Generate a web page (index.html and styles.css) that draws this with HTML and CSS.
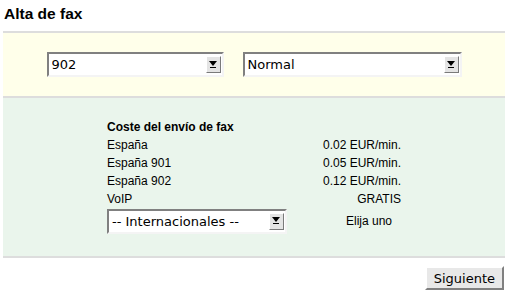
FILE: index.html
```html
<!DOCTYPE html>
<html lang="es">
<head>
    <meta charset="UTF-8">
    <title>Alta de fax</title>
    <link rel="stylesheet" href="styles.css">
</head>
<body>
    <h1 class="title">Alta de fax</h1>

    <div class="panel filters">
        <div class="select w-prefix">
            <select><option>902</option></select>
            <span class="arrow"><svg width="9" height="8" viewBox="0 0 9 8"><polygon points="0,0 8,0 4,5" fill="#000"/><rect x="1" y="6" width="6" height="1" fill="#000"/></svg></span>
        </div>
        <div class="select w-type">
            <select><option>Normal</option></select>
            <span class="arrow"><svg width="9" height="8" viewBox="0 0 9 8"><polygon points="0,0 8,0 4,5" fill="#000"/><rect x="1" y="6" width="6" height="1" fill="#000"/></svg></span>
        </div>
    </div>

    <div class="panel costs">
        <table class="rates">
            <tr><th colspan="2">Coste del envío de fax</th></tr>
            <tr><td>España</td><td class="price">0.02 EUR/min.</td></tr>
            <tr><td>España 901</td><td class="price">0.05 EUR/min.</td></tr>
            <tr><td>España 902</td><td class="price">0.12 EUR/min.</td></tr>
            <tr><td>VoIP</td><td class="price">GRATIS</td></tr>
            <tr class="intl">
                <td>
                    <div class="select w-intl">
                        <select><option>-- Internacionales --</option></select>
                        <span class="arrow"><svg width="9" height="8" viewBox="0 0 9 8"><polygon points="0,0 8,0 4,5" fill="#000"/><rect x="1" y="6" width="6" height="1" fill="#000"/></svg></span>
                    </div>
                </td>
                <td class="price pick">Elija uno</td>
            </tr>
        </table>
    </div>

    <div class="actions">
        <button class="btn">Siguiente</button>
    </div>
</body>
</html>
```

FILE: styles.css
```css
body {
    margin: 0;
    font-family: "Liberation Sans", Arial, sans-serif;
    font-size: 12px;
    color: #000;
    background-color: #fff;
}
.title {
    margin: 0;
    padding: 5px 4px 0;
    height: 26px;
    font-size: 15.5px;
    font-weight: bold;
}
.panel {
    margin: 0 4px 0 3px;
    border-top: 2px solid #dddddd;
}
.filters {
    background-color: #ffffea;
    padding: 19px 0;
    display: flex;
    justify-content: center;
    gap: 19px;
}
.costs {
    background-color: #eaf5ec;
    border-bottom: 2px solid #dddddd;
    padding: 20px 0 22px;
}

/* old style select box */
.select {
    display: flex;
    align-items: center;
    height: 21px;
    border: 2px solid;
    border-color: #808080 #f4f4f4 #f4f4f4 #808080;
    background-color: #fff;
}
.select select {
    flex: 1;
    min-width: 0;
    height: 100%;
    appearance: none;
    -webkit-appearance: none;
    border: none;
    outline: none;
    background: transparent;
    padding: 0 3px;
    font-family: "DejaVu Sans", sans-serif;
    font-size: 13px;
    color: #000;
}
.select .arrow {
    width: 13px;
    height: 15px;
    margin-right: 1px;
    display: flex;
    align-items: center;
    justify-content: center;
    background-color: #e4e4e4;
    border: 1px solid;
    border-color: #fff #7a7a7a #7a7a7a #fff;
}
.w-prefix { width: 173px; }
.w-type { width: 215px; }
.w-intl { width: 176px; }

.rates {
    width: 294px;
    margin: 0 auto;
    border-collapse: collapse;
}
.rates th,
.rates td {
    padding: 0;
    height: 18px;
    text-align: left;
}
.rates th {
    font-weight: bold;
}
.rates .price {
    text-align: right;
}
.rates .intl td {
    height: 26px;
}
.rates .pick {
    padding-right: 9px;
}

.actions {
    display: flex;
    justify-content: flex-end;
    padding: 8px 5px 0;
}
.btn {
    font-family: "DejaVu Sans", sans-serif;
    font-size: 13px;
    color: #000;
    padding: 2px 7px;
    height: 24px;
    background-color: #e8e8e8;
    border: 2px solid;
    border-color: #fff #808080 #808080 #fff;
    cursor: pointer;
}
```
